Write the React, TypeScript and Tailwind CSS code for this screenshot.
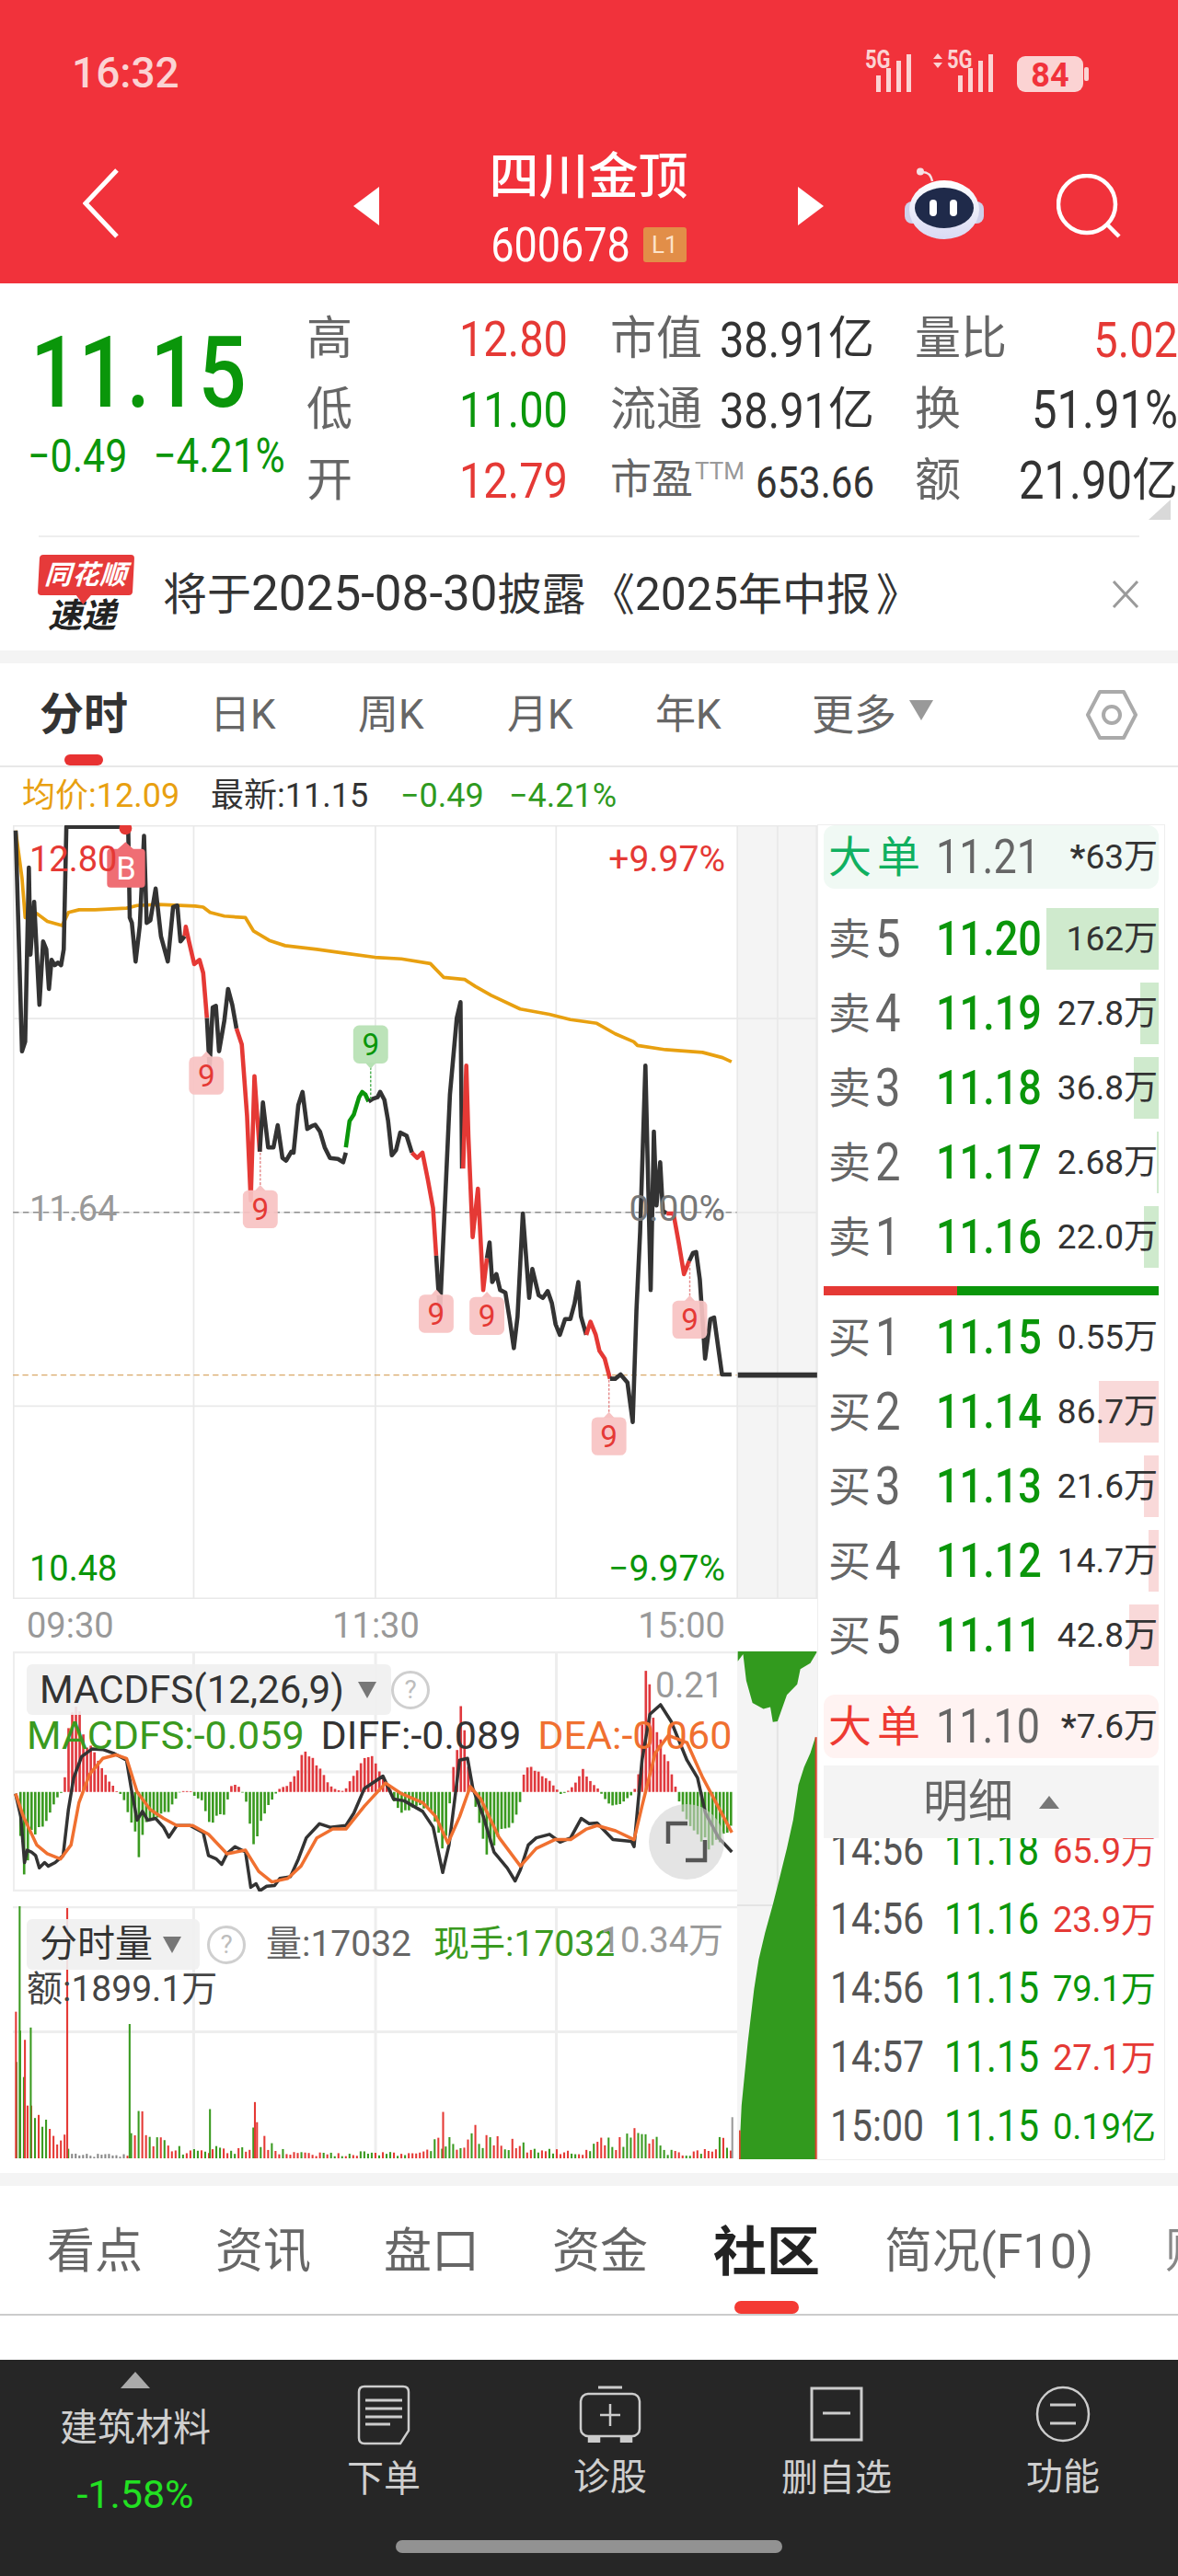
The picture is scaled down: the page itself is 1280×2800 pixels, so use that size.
import type { ReactNode } from "react";

type Pt = [number, number];

const RED = "#e53935";
const GREEN = "#0a960a";

// price line, traced in chart units. each piece has its own colour
const priceLine: { c: string; d: string }[] = [
  { c: "#333333", d: "30,40 42,458 48,440 55,110 58,275 65,175 75,370 82,250 88,265 93,340 98,285 104,295 110,290 116,295 121,265 126,33 243,33 246,205 250,215 257,288 265,220 273,50 278,215 285,210 295,150 305,240 318,288 328,185 336,182 342,250 350,240" },
  { c: "#e53935", d: "350,240 352,222 358,250 368,293 378,285 385,310 392,395" },
  { c: "#333333", d: "392,395 397,490 403,375 409,372 415,458 425,400 432,340 440,370 448,415" },
  { c: "#e53935", d: "448,415 458,445 468,580 475,740 482,505 492,648" },
  { c: "#333333", d: "492,648 498,555 508,640 518,640 526,598 535,660 542,665 552,648 556,650 565,560 573,535 582,605 590,600 597,597 606,610 615,640 625,660 640,662 650,668 655,650" },
  { c: "#0a960a", d: "655,640 662,590 670,578 680,545 686,535 692,540 698,553" },
  { c: "#333333", d: "698,553 706,548 715,545 720,535 728,550 735,590 742,655 750,645 758,612 770,618 780,650" },
  { c: "#e53935", d: "780,650 790,660 800,650 810,700 820,755 826,845" },
  { c: "#333333", d: "826,845 833,955 842,760 852,540 865,395 872,365 875,680" },
  { c: "#e53935", d: "877,680 883,485 887,620 895,810 905,718 915,910 922,850" },
  { c: "#333333", d: "922,850 927,820 932,895 940,880 947,910 957,915 965,965 973,1020 980,960 990,765 1002,925 1008,870 1020,920 1028,925 1037,912 1045,935 1052,975 1060,995 1070,965 1080,965 1088,935 1095,895 1100,960 1110,995" },
  { c: "#e53935", d: "1110,995 1118,970 1128,995 1135,1025 1145,1040 1155,1078" },
  { c: "#333333", d: "1155,1078 1165,1078 1175,1070 1188,1085 1198,1160 1205,950 1212,800 1222,485 1232,910 1238,610 1243,750 1250,668 1255,760 1262,765" },
  { c: "#e53935", d: "1262,765 1275,765 1285,820 1295,880 1305,855" },
  { c: "#333333", d: "1305,855 1312,840 1318,838 1325,890 1335,1040 1345,965 1352,962 1360,1020 1367,1070 1385,1070" },
];

const avgLine = "30,40 42,130 48,205 70,197 90,212 118,220 130,195 150,190 180,190 240,187 260,182 300,180 370,183 385,185 398,195 425,202 465,205 480,230 510,248 540,258 600,265 650,272 710,280 760,283 815,292 840,318 880,322 900,335 930,352 985,378 1040,388 1080,398 1130,405 1165,425 1200,440 1207,447 1260,455 1330,460 1368,470 1385,478";

const diffLine = "30,495 40,560 47,690 52,655 60,660 68,670 75,705 85,690 92,700 105,690 120,670 130,540 140,450 155,390 175,368 195,370 215,380 240,400 250,490 260,570 270,545 280,570 295,565 310,590 320,618 335,585 360,585 385,605 395,670 410,680 420,695 430,665 445,645 465,660 475,760 485,750 492,770 505,757 520,755 530,735 550,730 565,680 580,620 605,580 625,590 655,585 670,550 690,480 725,445 745,510 765,515 800,545 820,590 838,718 850,640 870,400 885,395 895,480 915,560 935,660 960,705 975,742 985,710 1000,640 1015,620 1040,610 1060,632 1080,620 1100,565 1115,580 1130,578 1160,625 1195,630 1200,645 1215,400 1230,270 1250,243 1270,290 1300,400 1320,450 1335,550 1360,620 1385,660";
const deaLine = "30,495 45,560 70,640 90,665 115,680 135,640 150,520 170,440 195,395 220,385 240,395 260,490 285,540 310,565 335,585 365,585 395,610 430,665 465,655 490,715 515,745 545,735 570,700 600,620 630,595 655,595 690,530 730,465 760,495 800,520 825,560 848,635 870,560 890,475 910,510 945,620 985,700 1015,650 1050,625 1080,625 1110,595 1130,585 1165,600 1200,625 1215,530 1240,380 1265,330 1300,350 1330,450 1385,605";

const histEnv: Pt[] = [[30, 0], [40, -200], [48, -270], [55, -120], [70, -110], [85, -90], [100, -40], [110, -5], [118, 0], [120, 30], [130, 200], [145, 240], [160, 150], [175, 110], [190, 70], [205, 30], [220, 0], [230, -10], [245, -90], [252, -90], [260, -195], [270, -90], [280, -80], [300, -70], [320, -50], [330, -20], [340, 3], [360, 2], [365, -10], [380, -25], [395, -90], [410, -70], [425, -70], [430, -10], [437, 20], [445, 22], [455, 5], [465, -30], [478, -150], [490, -95], [505, -40], [520, -5], [528, 10], [545, 20], [560, 60], [575, 125], [590, 100], [605, 60], [620, 20], [635, 5], [650, 2], [660, 30], [675, 70], [690, 105], [705, 90], [720, 55], [735, 15], [745, -30], [755, -55], [790, -40], [810, -50], [820, -80], [835, -150], [845, -100], [855, 60], [865, 130], [872, 300], [880, 100], [890, 40], [900, -60], [915, -170], [930, -145], [945, -110], [965, -90], [980, -50], [985, -5], [990, 60], [1000, 80], [1015, 60], [1035, 35], [1050, 10], [1060, -8], [1075, 5], [1090, 35], [1100, 70], [1115, 30], [1132, 5], [1140, -15], [1160, -45], [1180, -25], [1195, -5], [1205, 30], [1215, 240], [1222, 400], [1235, 220], [1250, 130], [1265, 70], [1278, 5], [1285, -40], [1300, -80], [1320, -130], [1345, -160], [1360, -130], [1385, -100]];

const volEnv: Pt[] = [[30, 400], [50, 300], [70, 140], [90, 110], [120, 80], [130, 40], [135, 12], [240, 12], [250, 140], [270, 120], [290, 60], [320, 50], [350, 25], [420, 40], [440, 20], [470, 60], [480, 120], [490, 70], [520, 30], [560, 20], [600, 15], [700, 20], [760, 15], [800, 25], [830, 70], [850, 60], [900, 90], [930, 70], [980, 55], [1000, 25], [1060, 25], [1100, 15], [1140, 60], [1160, 55], [1205, 100], [1230, 85], [1260, 25], [1300, 15], [1350, 40], [1370, 75], [1385, 20]];

const volTall: { x: number; top: number; c: string }[] = [
  { x: 37, top: 815, c: "#3a9a20" },
  { x: 127, top: 820, c: "#e53935" },
  { x: 245, top: 1150, c: "#3a9a20" },
  { x: 30, top: 1115, c: "#e53935" },
  { x: 58, top: 1160, c: "#3a9a20" },
  { x: 47, top: 1195, c: "#e53935" },
  { x: 397, top: 1392, c: "#3a9a20" },
  { x: 482, top: 1372, c: "#e53935" },
  { x: 838, top: 1400, c: "#e53935" },
  { x: 1385, top: 1415, c: "#999999" },
];

let seed = 11;
const rnd = () => {
  seed = (seed * 16807) % 2147483647;
  return seed / 2147483647;
};

const envAt = (env: Pt[], x: number) => {
  for (let i = 1; i < env.length; i++) {
    if (x <= env[i][0]) {
      const [x0, y0] = env[i - 1];
      const [x1, y1] = env[i];
      return y0 + ((y1 - y0) * (x - x0)) / (x1 - x0);
    }
  }
  return 0;
};

const histBars: { x: number; v: number }[] = [];
const volBars: { x: number; h: number; c: string }[] = [];
for (let x = 30; x <= 1388; x += 7) {
  histBars.push({ x, v: envAt(histEnv, x) * (0.88 + 0.22 * rnd()) });
  const quiet = x > 132 && x < 240;
  volBars.push({
    x,
    h: envAt(volEnv, x) * (0.35 + 0.75 * rnd()),
    c: quiet ? "#888888" : rnd() > 0.5 ? "#e53935" : "#3a9a20",
  });
}

const nineBadges = [
  { x: 391, y: 504, up: true, c: "r", stem: null },
  { x: 493, y: 757, up: true, c: "r", stem: [650, 722] },
  { x: 826, y: 955, up: true, c: "r", stem: null },
  { x: 922, y: 959, up: true, c: "r", stem: null },
  { x: 1153, y: 1187, up: true, c: "r", stem: [1080, 1152] },
  { x: 1306, y: 966, up: true, c: "r", stem: [860, 930] },
  { x: 702, y: 445, up: false, c: "g", stem: [480, 550] },
];

const sells = [
  { n: "5", p: "11.20", q: "162", bar: 122 },
  { n: "4", p: "11.19", q: "27.8", bar: 20 },
  { n: "3", p: "11.18", q: "36.8", bar: 27 },
  { n: "2", p: "11.17", q: "2.68", bar: 2 },
  { n: "1", p: "11.16", q: "22.0", bar: 16 },
];
const buys = [
  { n: "1", p: "11.15", q: "0.55", bar: 0 },
  { n: "2", p: "11.14", q: "86.7", bar: 65 },
  { n: "3", p: "11.13", q: "21.6", bar: 16 },
  { n: "4", p: "11.12", q: "14.7", bar: 11 },
  { n: "5", p: "11.11", q: "42.8", bar: 32 },
];
const ticks = [
  { t: "14:56", p: "11.18", q: "65.9万", c: "text-[#e53935]" },
  { t: "14:56", p: "11.16", q: "23.9万", c: "text-[#e53935]" },
  { t: "14:56", p: "11.15", q: "79.1万", c: "text-[#0a960a]" },
  { t: "14:57", p: "11.15", q: "27.1万", c: "text-[#e53935]" },
  { t: "15:00", p: "11.15", q: "0.19亿", c: "text-[#0a960a]" },
];

// digits in the app are taller than Roboto's at the same width
const Tall = ({ children, className = "" }: { children: ReactNode; className?: string }) => (
  <span className={`inline-block scale-y-[1.16] ${className}`}>{children}</span>
);

const Help = () => (
  <span className="flex h-[42px] w-[42px] items-center justify-center rounded-full border-[3px] border-[#cfcfcf] text-[28px] leading-none text-[#bdbdbd]">?</span>
);

const DownTri = ({ className = "" }: { className?: string }) => (
  <svg width="22" height="20" viewBox="0 0 22 20" className={className}>
    <path d="M1 1h20L11 19z" fill="#777777" />
  </svg>
);

const QuoteRow = ({ label, value, color, mid, midVal, right, rightVal, rightColor }: {
  label: string;
  value: string;
  color: string;
  mid: ReactNode;
  midVal: ReactNode;
  right: string;
  rightVal: ReactNode;
  rightColor: string;
}) => (
  <div className="flex h-[77px] items-center text-[50px] leading-none text-[#666666]">
    <div className="flex w-[284px] items-center justify-between">
      <span>{label}</span>
      <Tall className={`text-[47px] ${color}`}>{value}</Tall>
    </div>
    <div className="ml-[46px] flex w-[287px] items-center justify-between">
      <span className="flex items-start">{mid}</span>
      <span className="text-[#333333]">{midVal}</span>
    </div>
    <div className="ml-[44px] flex w-[286px] items-center justify-between">
      <span>{right}</span>
      <span className={rightColor}>{rightVal}</span>
    </div>
  </div>
);

const BookRow = ({ side, n, p, q, bar }: { side: string; n: string; p: string; q: string; bar: number }) => (
  <div className="relative flex h-[81px] items-center pl-[5px]">
    {bar > 0 && (
      <div
        className={`absolute right-0 top-[7px] h-[67px] ${side === "卖" ? "bg-[#cfeacd]" : "bg-[#f9d9d9]"}`}
        style={{ width: bar }}
      />
    )}
    <div className="relative flex w-[117px] items-center text-[46px] leading-none text-[#666666]">
      <span>{side}</span>
      <Tall className="ml-[5px] text-[49px]">{n}</Tall>
    </div>
    <Tall className="relative text-[45px] font-medium leading-none text-[#0a960a]">{p}</Tall>
    <span className="relative ml-auto pr-[1px] text-[37px] leading-none text-[#333333]">{q}万</span>
  </div>
);

const BigOrder = ({ green, p, q }: { green: boolean; p: string; q: string }) => (
  <div className={`flex h-[69px] items-center rounded-[12px] pl-[5px] ${green ? "bg-[#f0f9f4]" : "bg-[#fff3f2]"}`}>
    <span className={`w-[117px] text-[47px] leading-none tracking-[6px] ${green ? "text-[#10b060]" : "text-[#ee3a32]"}`}>大单</span>
    <Tall className="text-[45px] leading-none text-[#666666]">{p}</Tall>
    <span className="ml-auto pr-[1px] text-[37px] leading-none text-[#333333]">
      <span className="font-bold">*</span>
      {q}万
    </span>
  </div>
);

const PriceChart = () => (
  <svg viewBox="25 30 1522 1465" width="874" height="841" className="block">
    <rect x="1397" y="30" width="150" height="1465" fill="#f4f4f4" />
    <g stroke="#e9e9e9" strokeWidth="3" fill="none">
      <path d="M25 31H1547M26 30V1495M25 1494H1547M367 30V1495M711 30V1495M1053 30V1495M1396 30V1495M1472 30V1495M1546 30V1495M25 396H1547M25 763H1547M25 1130H1547" />
    </g>
    <path d="M25 763H1395" stroke="#8f8f8f" strokeWidth="2.5" strokeDasharray="11 8" />
    <path d="M25 1071H1395" stroke="#d9a868" strokeWidth="2.5" strokeDasharray="11 7" />
    <polyline points={avgLine} fill="none" stroke="#e8a010" strokeWidth="6.5" strokeLinejoin="round" />
    {priceLine.map((s, i) => (
      <polyline key={i} points={s.d} fill="none" stroke={s.c} strokeWidth="8" strokeLinejoin="round" />
    ))}
    <path d="M1397 1071H1547" stroke="#333333" strokeWidth="10" />
    {nineBadges.map((b, i) => (
      <g key={i}>
        {b.stem && <path d={`M${b.x} ${b.stem[0]}V${b.stem[1]}`} stroke={b.c === "r" ? "#e58a8a" : "#4caf50"} strokeWidth="2.5" strokeDasharray="5 3" />}
        <rect x={b.x - 33} y={b.y - 36} width="66" height="72" rx="11" fill={b.c === "r" ? "#f7c2c2" : "#b6e1b3"} fillOpacity="0.92" />
        <path d={b.up ? `M${b.x - 10} ${b.y - 35}L${b.x} ${b.y - 46}L${b.x + 10} ${b.y - 35}Z` : `M${b.x - 10} ${b.y + 35}L${b.x} ${b.y + 46}L${b.x + 10} ${b.y + 35}Z`} fill={b.c === "r" ? "#f7c2c2" : "#b6e1b3"} />
        <text x={b.x} y={b.y + 21} textAnchor="middle" fontSize="58" fontFamily="Roboto" fill={b.c === "r" ? RED : GREEN}>9</text>
      </g>
    ))}
    <circle cx="238" cy="36" r="12" fill="#e53935" />
    <path d="M238 62L222 76H254Z" fill="#ef6e74" />
    <rect x="203" y="75" width="72" height="73" rx="7" fill="#ef6e74" />
    <text x="239" y="132" textAnchor="middle" fontSize="60" fontFamily="Roboto" fill="#ffffff">B</text>
  </svg>
);

const MacdChart = () => (
  <svg viewBox="25 92 1370 680" width="787" height="261" preserveAspectRatio="none" className="block">
    <path d="M25 94H1395M25 770H1395M25 433H1395M367 92V772M711 92V772M1053 92V772M26 92V772" stroke="#eeeeee" strokeWidth="3" fill="none" vectorEffect="non-scaling-stroke" />
    {histBars.map((b) => (
      <rect key={b.x} x={b.x} y={b.v > 0 ? 490 - b.v : 490} width="4.6" height={Math.abs(b.v)} fill={b.v > 0 ? "#e0393e" : "#3a9a20"} />
    ))}
    <polyline points={diffLine} fill="none" stroke="#333333" strokeWidth="3.5" strokeLinejoin="round" vectorEffect="non-scaling-stroke" />
    <polyline points={deaLine} fill="none" stroke="#f07030" strokeWidth="3.5" strokeLinejoin="round" vectorEffect="non-scaling-stroke" />
  </svg>
);

const VolumeChart = () => (
  <svg viewBox="25 815 1370 717" width="787" height="274" preserveAspectRatio="none" className="block">
    <path d="M25 817H1395M25 1172H1395M367 815V1532M711 815V1532M1053 815V1532" stroke="#eeeeee" strokeWidth="3" fill="none" vectorEffect="non-scaling-stroke" />
    {volBars.map((b) => (
      <rect key={b.x} x={b.x} y={1532 - b.h} width="3.6" height={b.h} fill={b.c} />
    ))}
    {volTall.map((b) => (
      <rect key={b.x} x={b.x - 1} y={b.top} width="3.6" height={1532 - b.top} fill={b.c} />
    ))}
  </svg>
);

const FlowBand = () => (
  <svg viewBox="66 92 256 1440" width="87" height="552" preserveAspectRatio="none" className="block">
    <rect x="66" y="92" width="256" height="1440" fill="#f4f4f4" />
    <path d="M195 92V1532M66 812H322" stroke="#e4e4e4" strokeWidth="2" vectorEffect="non-scaling-stroke" />
    <path d="M68 92V120L85 100L95 175L115 238L150 255L172 250L180 292L195 290L225 215L258 185L268 142L300 125L320 95V92Z" fill="#329a1e" />
    <path d="M72 1532L80 1380L100 1200L120 1050L135 965L155 890L180 810L200 740L225 650L245 570L262 470L280 420L300 380L316 335V1532Z" fill="#329a1e" />
    <rect x="315" y="335" width="6" height="1197" fill="#d9412c" />
    <rect x="72" y="1450" width="5" height="82" fill="#d9412c" />
  </svg>
);

const App = () => {
  return (
    <div className="flex h-[2800px] w-[1280px] flex-col overflow-hidden bg-white font-[family-name:Roboto,'Noto_Sans_CJK_SC',sans-serif]">
      {/* red header */}
      <header className="h-[308px] shrink-0 bg-[#f1323b] text-white">
        <div className="flex h-[150px] items-start">
          <span className="ml-[78px] mt-[56px] text-[46px] font-medium leading-[46px] text-[#fbd3d3]">16:32</span>
          <svg width="245" height="52" viewBox="0 -8 245 52" className="ml-[743px] mt-[50px]">
            <g fill="#fbd3d3">
              <text transform="translate(2 16) scale(1 1.25)" fontSize="22" fontWeight="700" fontFamily="Roboto">5G</text>
              <rect x="14" y="24" width="5" height="18" />
              <rect x="25" y="16" width="5" height="26" />
              <rect x="36" y="8" width="5" height="34" />
              <rect x="47" y="1" width="5" height="41" />
              <path d="M76 6l5-6 5 6zM76 10l5 6 5-6z" />
              <text transform="translate(91 16) scale(1 1.25)" fontSize="22" fontWeight="700" fontFamily="Roboto">5G</text>
              <rect x="103" y="24" width="5" height="18" />
              <rect x="114" y="16" width="5" height="26" />
              <rect x="125" y="8" width="5" height="34" />
              <rect x="136" y="1" width="5" height="41" />
              <rect x="167" y="3" width="72" height="39" rx="9" />
              <rect x="240" y="15" width="5" height="15" rx="2" />
            </g>
            <text x="203" y="36" textAnchor="middle" fontSize="36" fontWeight="700" fontFamily="Roboto" fill="#f1323b">84</text>
          </svg>
        </div>
        <div className="flex h-[158px] items-start">
          <svg width="40" height="76" viewBox="0 0 40 76" className="ml-[90px] mt-[33px]">
            <path d="M37 2L3 38L37 74" fill="none" stroke="#ffffff" strokeWidth="5" />
          </svg>
          <svg width="28" height="42" viewBox="0 0 28 42" className="ml-[254px] mt-[53px]">
            <path d="M28 0V42L0 21Z" fill="#ffffff" />
          </svg>
          <div className="flex w-[455px] flex-col items-center pt-[15px]">
            <span className="text-[54px] font-medium leading-[56px]">四川金顶</span>
            <div className="mt-[20px] flex h-[50px] items-center gap-[14px]">
              <Tall className="text-[45px] leading-none">600678</Tall>
              <span className="flex h-[38px] w-[47px] items-center justify-center rounded-[3px] bg-[#e28e48] text-[26px] leading-none text-[#fde3c8]">L1</span>
            </div>
          </div>
          <svg width="28" height="42" viewBox="0 0 28 42" className="mt-[53px]">
            <path d="M0 0V42L28 21Z" fill="#ffffff" />
          </svg>
          <svg width="86" height="78" viewBox="0 0 86 78" className="ml-[88px] mt-[32px]">
            <defs>
              <linearGradient id="robotHead" x1="0" y1="0" x2="0" y2="1">
                <stop offset="0" stopColor="#ffffff" />
                <stop offset="1" stopColor="#d9daf4" />
              </linearGradient>
            </defs>
            <circle cx="17" cy="4.500" r="4" fill="#f4e3e6" />
            <path d="M19 5c8 0 10 5 11 10" fill="none" stroke="#f4e3e6" strokeWidth="2.500" />
            <rect x="0" y="37" width="86" height="24" rx="8" fill="#cfd0ea" />
            <ellipse cx="43" cy="46" rx="38" ry="32" fill="url(#robotHead)" />
            <ellipse cx="43" cy="44" rx="32" ry="22" fill="#1f2a4a" />
            <rect x="27" y="35" width="8" height="18" rx="4" fill="#ffffff" />
            <rect x="49" y="35" width="8" height="18" rx="4" fill="#ffffff" />
          </svg>
          <svg width="72" height="72" viewBox="0 0 72 72" className="ml-[79px] mt-[39px]">
            <circle cx="33" cy="33" r="31" fill="none" stroke="#ffffff" strokeWidth="4.500" />
            <path d="M56 56L68 68" stroke="#ffffff" strokeWidth="4.500" />
          </svg>
        </div>
      </header>

      {/* quote */}
      <section className="relative flex h-[274px] shrink-0">
        <div className="flex w-[333px] shrink-0 flex-col pl-[30px] pt-[48px]">
          <Tall className="ml-[3px] self-start text-[92px] font-medium leading-[100px] text-[#0a960a]">11.15</Tall>
          <div className="mt-[18px] flex h-[44px] items-center gap-[28px] text-[#0a960a]">
            <Tall className="text-[43px] leading-none">−0.49</Tall>
            <Tall className="text-[44px] leading-none">−4.21%</Tall>
          </div>
        </div>
        <div className="flex w-[947px] flex-col pt-[21px]">
          <QuoteRow label="高" value="12.80" color="text-[#e53935]" mid="市值" midVal={<><Tall className="text-[47px]">38.91</Tall>亿</>} right="量比" rightVal={<Tall className="text-[47px]">5.02</Tall>} rightColor="text-[#e53935]" />
          <QuoteRow label="低" value="11.00" color="text-[#0a960a]" mid="流通" midVal={<><Tall className="text-[47px]">38.91</Tall>亿</>} right="换" rightVal={<Tall className="text-[49px]">51.91%</Tall>} rightColor="text-[#333333]" />
          <QuoteRow label="开" value="12.79" color="text-[#e53935]" mid={<><span className="text-[45px]">市盈</span><span className="ml-[2px] text-[26px] leading-[26px] text-[#999999]">TTM</span></>} midVal={<Tall className="text-[42px]">653.66</Tall>} right="额" rightVal={<><Tall className="text-[49px]">21.90</Tall>亿</>} rightColor="text-[#333333]" />
        </div>
        <svg width="24" height="22" viewBox="0 0 24 22" className="absolute bottom-[17px] right-[8px]">
          <path d="M24 0V22H0Z" fill="#d9d9d9" />
        </svg>
      </section>

      {/* news banner */}
      <section className="mx-[42px] flex h-[125px] shrink-0 items-center border-t-2 border-[#eeeeee]">
        <div className="flex w-[135px] flex-col items-start pt-[2px]">
          <div className="relative flex h-[44px] w-[103px] -skew-x-3 items-center justify-center rounded-[4px] bg-[#e63a3a]">
            <span className="text-[29px] font-bold italic leading-none tracking-[1px] text-white">同花顺</span>
            <span className="absolute -bottom-[10px] left-[42px] h-0 w-0 border-x-[8px] border-t-[10px] border-x-transparent border-t-[#e63a3a]" />
          </div>
          <span className="ml-[10px] mt-[3px] text-[37px] font-bold italic leading-[40px] text-[#222222]">速递</span>
        </div>
        <span className="whitespace-nowrap text-[48px] leading-none text-[#333333]">将于<span className="text-[53px]">2025-08-30</span>披露<span className="ml-[5px]">《</span><span className="text-[50px]">2025</span>年中报<span className="ml-[6px]">》</span></span>
        <svg width="30" height="32" viewBox="0 0 30 32" className="ml-auto">
          <path d="M2 2L28 30M28 2L2 30" stroke="#9a9a9a" strokeWidth="3" />
        </svg>
      </section>

      <div className="h-[14px] shrink-0 bg-[#f4f4f4]" />

      {/* period tabs */}
      <nav className="relative flex h-[113px] shrink-0 items-center border-b-2 border-[#e8e8e8] text-[44px] leading-none text-[#666666]">
        <span className="ml-[43px] w-[185px] shrink-0 text-[48px] font-bold text-[#333333]">分时</span>
        <span className="w-[161px] shrink-0">日K</span>
        <span className="w-[162px] shrink-0">周K</span>
        <span className="w-[161px] shrink-0">月K</span>
        <span className="w-[170px] shrink-0">年K</span>
        <span className="shrink-0 text-[46px]">更多</span>
        <svg width="26" height="22" viewBox="0 0 26 22" className="ml-[14px] -mt-[10px] shrink-0">
          <path d="M0 0H26L13 22Z" fill="#999999" />
        </svg>
        <svg width="56" height="54" viewBox="0 0 56 54" className="ml-[166px] shrink-0">
          <path d="M15 2H41L54 27L41 52H15L2 27Z" fill="none" stroke="#aaaaaa" strokeWidth="4" strokeLinejoin="round" />
          <circle cx="28" cy="27" r="9" fill="none" stroke="#aaaaaa" strokeWidth="4" />
        </svg>
        <span className="absolute bottom-0 left-[70px] h-[12px] w-[42px] rounded-full bg-[#e83232]" />
      </nav>

      {/* info line */}
      <div className="flex h-[62px] shrink-0 items-center text-[36px] leading-none">
        <span className="ml-[24px] w-[205px] text-[#e8a010]">均价:12.09</span>
        <span className="w-[206px] text-[#333333]">最新:11.15</span>
        <span className="w-[118px] text-[#2f9a1f]">−0.49</span>
        <span className="text-[#2f9a1f]">−4.21%</span>
      </div>

      {/* charts + order book */}
      <section className="flex h-[1452px] shrink-0">
        <div className="flex w-[888px] flex-col pl-[14px] pt-[1px]">
          <div className="relative h-[841px] w-[874px]">
            <PriceChart />
            <span className="absolute left-[18px] top-[18px] text-[38px] leading-[38px] text-[#e53935]">12.80</span>
            <span className="absolute right-[100px] top-[18px] text-[39px] leading-[38px] text-[#e53935]">+9.97%</span>
            <span className="absolute left-[18px] top-[398px] text-[38px] leading-[38px] text-[#999999]">11.64</span>
            <span className="absolute right-[100px] top-[398px] text-[39px] leading-[38px] text-[#777777]">0.00%</span>
            <span className="absolute left-[18px] top-[789px] text-[38px] leading-[38px] text-[#0a960a]">10.48</span>
            <span className="absolute right-[100px] top-[789px] text-[39px] leading-[38px] text-[#0a960a]">−9.97%</span>
          </div>
          <div className="flex h-[57px] items-center justify-between pl-[15px] pr-[100px] text-[38px] leading-none text-[#999999]">
            <span>09:30</span>
            <span>11:30</span>
            <span>15:00</span>
          </div>
          <div className="flex">
            <div className="flex w-[787px] flex-col">
              <div className="relative h-[261px]">
                <MacdChart />
                <div className="absolute left-[15px] top-[14px] flex items-center">
                  <div className="flex h-[55px] w-[396px] items-center rounded-[6px] bg-[#f0f0f0]/90 pl-[14px] text-[42px] leading-none text-[#333333]">
                    MACDFS(12,26,9)
                    <DownTri className="ml-[14px]" />
                  </div>
                  <Help />
                </div>
                <span className="absolute right-[15px] top-[18px] text-[38px] leading-[38px] text-[#999999]">0.21</span>
                <div className="absolute left-[15px] top-[70px] flex gap-[18px] whitespace-nowrap text-[43px] leading-[42px]">
                  <span className="text-[#3a9a20]">MACDFS:-0.059</span>
                  <span className="text-[#333333]">DIFF:-0.089</span>
                  <span className="text-[#f07030]">DEA:-0.060</span>
                </div>
                <div className="absolute left-[691px] top-[166px] flex h-[82px] w-[82px] items-center justify-center rounded-full bg-[#d2d2d2]/60">
                  <svg width="46" height="48" viewBox="0 0 46 48">
                    <path d="M3 26V4H24M43 22V44H22" fill="none" stroke="#555555" strokeWidth="4.500" />
                  </svg>
                </div>
              </div>
              <div className="h-[16px]" />
              <div className="relative h-[275px]">
                <VolumeChart />
                <div className="absolute left-[15px] top-[14px] flex items-center text-[39px] leading-none">
                  <div className="flex h-[55px] w-[188px] items-center rounded-[6px] bg-[#f0f0f0]/90 pl-[14px] text-[41px] text-[#333333]">
                    分时量
                    <DownTri className="ml-[10px]" />
                  </div>
                  <span className="ml-[8px]"><Help /></span>
                  <span className="ml-[22px] text-[#666666]">量:17032</span>
                  <span className="ml-[24px] text-[#3a9a20]">现手:17032</span>
                </div>
                <span className="absolute right-[15px] top-[18px] text-[38px] leading-[38px] text-[#999999]">10.34万</span>
                <span className="absolute left-[15px] top-[70px] text-[39px] leading-[40px] text-[#444444]">额:1899.1万</span>
              </div>
            </div>
            <FlowBand />
          </div>
        </div>

        <div className="flex w-[378px] flex-col border border-[#eeeeee] px-[6px]">
          <BigOrder green p="11.21" q="63" />
          <div className="mt-[14px]">
            {sells.map((r) => (
              <BookRow key={r.n} side="卖" {...r} />
            ))}
          </div>
          <div className="mt-[13px] flex h-[10px] shrink-0">
            <div className="w-[145px] bg-[#e53935]" />
            <div className="flex-1 bg-[#0a960a]" />
          </div>
          <div className="mt-[5px]">
            {buys.map((r) => (
              <BookRow key={r.n} side="买" {...r} />
            ))}
          </div>
          <div className="mt-[24px]">
            <BigOrder green={false} p="11.10" q="7.6" />
          </div>
          <div className="mt-[8px] flex h-[79px] shrink-0 items-center justify-center gap-[28px] bg-[#f4f4f4] text-[49px] leading-none text-[#666666]">
            <span>明细</span>
            <svg width="22" height="14" viewBox="0 0 22 14">
              <path d="M11 0L22 14H0Z" fill="#777777" />
            </svg>
          </div>
          <div className="min-h-0 flex-1 overflow-hidden">
            <div className="-mt-[24px]">
              {ticks.map((r, i) => (
                <div key={i} className="flex h-[75px] items-center pl-[7px] leading-none">
                  <Tall className="w-[124px] text-[41px] text-[#555555]">{r.t}</Tall>
                  <Tall className="text-[41px] text-[#0a960a]">{r.p}</Tall>
                  <span className={`ml-auto pr-[3px] text-[38px] ${r.c}`}>{r.q}</span>
                </div>
              ))}
            </div>
          </div>
        </div>
      </section>

      <div className="h-[14px] shrink-0" />
      <div className="h-[14px] shrink-0 bg-[#f4f4f4]" />

      {/* bottom tabs */}
      <nav className="relative flex h-[141px] shrink-0 items-center overflow-hidden whitespace-nowrap border-b-2 border-[#cccccc] pt-[4px] text-[52px] leading-none text-[#666666]">
        <span className="ml-[51px] w-[183px] shrink-0">看点</span>
        <span className="w-[183px] shrink-0">资讯</span>
        <span className="w-[183px] shrink-0">盘口</span>
        <span className="w-[175px] shrink-0">资金</span>
        <span className="w-[186px] shrink-0 text-[58px] font-bold text-[#222222]">社区</span>
        <span className="w-[305px] shrink-0 text-[52px]">简况(F10)</span>
        <span className="shrink-0 text-[#888888]">财务</span>
        <span className="absolute bottom-0 left-[798px] h-[14px] w-[70px] rounded-full bg-[#f43a33]" />
      </nav>

      <div className="h-[48px] shrink-0" />

      {/* dark bottom bar */}
      <footer className="flex h-[235px] shrink-0 flex-col bg-[#262626] text-[40px] leading-none text-[#cfcfcf]">
        <div className="grid h-[196px] grid-cols-[294px_repeat(4,246px)]">
          <div className="flex flex-col items-center pt-[13px]">
            <svg width="32" height="18" viewBox="0 0 32 18">
              <path d="M16 0L32 18H0Z" fill="#aaaaaa" />
            </svg>
            <span className="mt-[21px] text-[41px] leading-[44px]">建筑材料</span>
            <span className="mt-[28px] text-[43px] leading-[44px] text-[#22e022]">-1.58%</span>
          </div>
          <div className="flex flex-col items-center pt-[27px]">
            <svg width="58" height="66" viewBox="0 0 58 66" fill="none" stroke="#cccccc" strokeWidth="2.500">
              <path d="M8 2H50Q56 2 56 8V50L47 64H8Q2 64 2 58V8Q2 2 8 2Z" />
              <path d="M9 17H49M9 26H49M9 35H49M9 43H36" strokeWidth="3" />
            </svg>
            <span className="mt-[17px]">下单</span>
          </div>
          <div className="flex flex-col items-center pt-[28px]">
            <svg width="68" height="62" viewBox="0 0 68 62" fill="none" stroke="#cccccc" strokeWidth="2.500">
              <path d="M21 2H47" strokeWidth="3" />
              <rect x="2" y="9" width="64" height="46" rx="8" />
              <path d="M34 20V44M23 32H45" />
              <path d="M11 56H22V61H11ZM46 56H57V61H46Z" fill="#cccccc" />
            </svg>
            <span className="mt-[18px]">诊股</span>
          </div>
          <div className="flex flex-col items-center pt-[29px]">
            <svg width="58" height="60" viewBox="0 0 58 60" fill="none" stroke="#cccccc" strokeWidth="3">
              <rect x="2" y="2" width="54" height="56" />
              <path d="M14 29H44" />
            </svg>
            <span className="mt-[20px]">删自选</span>
          </div>
          <div className="flex flex-col items-center pt-[28px]">
            <svg width="60" height="62" viewBox="0 0 60 62" fill="none" stroke="#cccccc" strokeWidth="2.500">
              <ellipse cx="30" cy="31" rx="28" ry="29" />
              <path d="M16 21H44M16 41H44" strokeWidth="3" />
            </svg>
            <span className="mt-[18px]">功能</span>
          </div>
        </div>
        <div className="flex justify-center">
          <div className="h-[14px] w-[420px] rounded-full bg-[#929292]" />
        </div>
      </footer>
    </div>
  );
};

export default App;
